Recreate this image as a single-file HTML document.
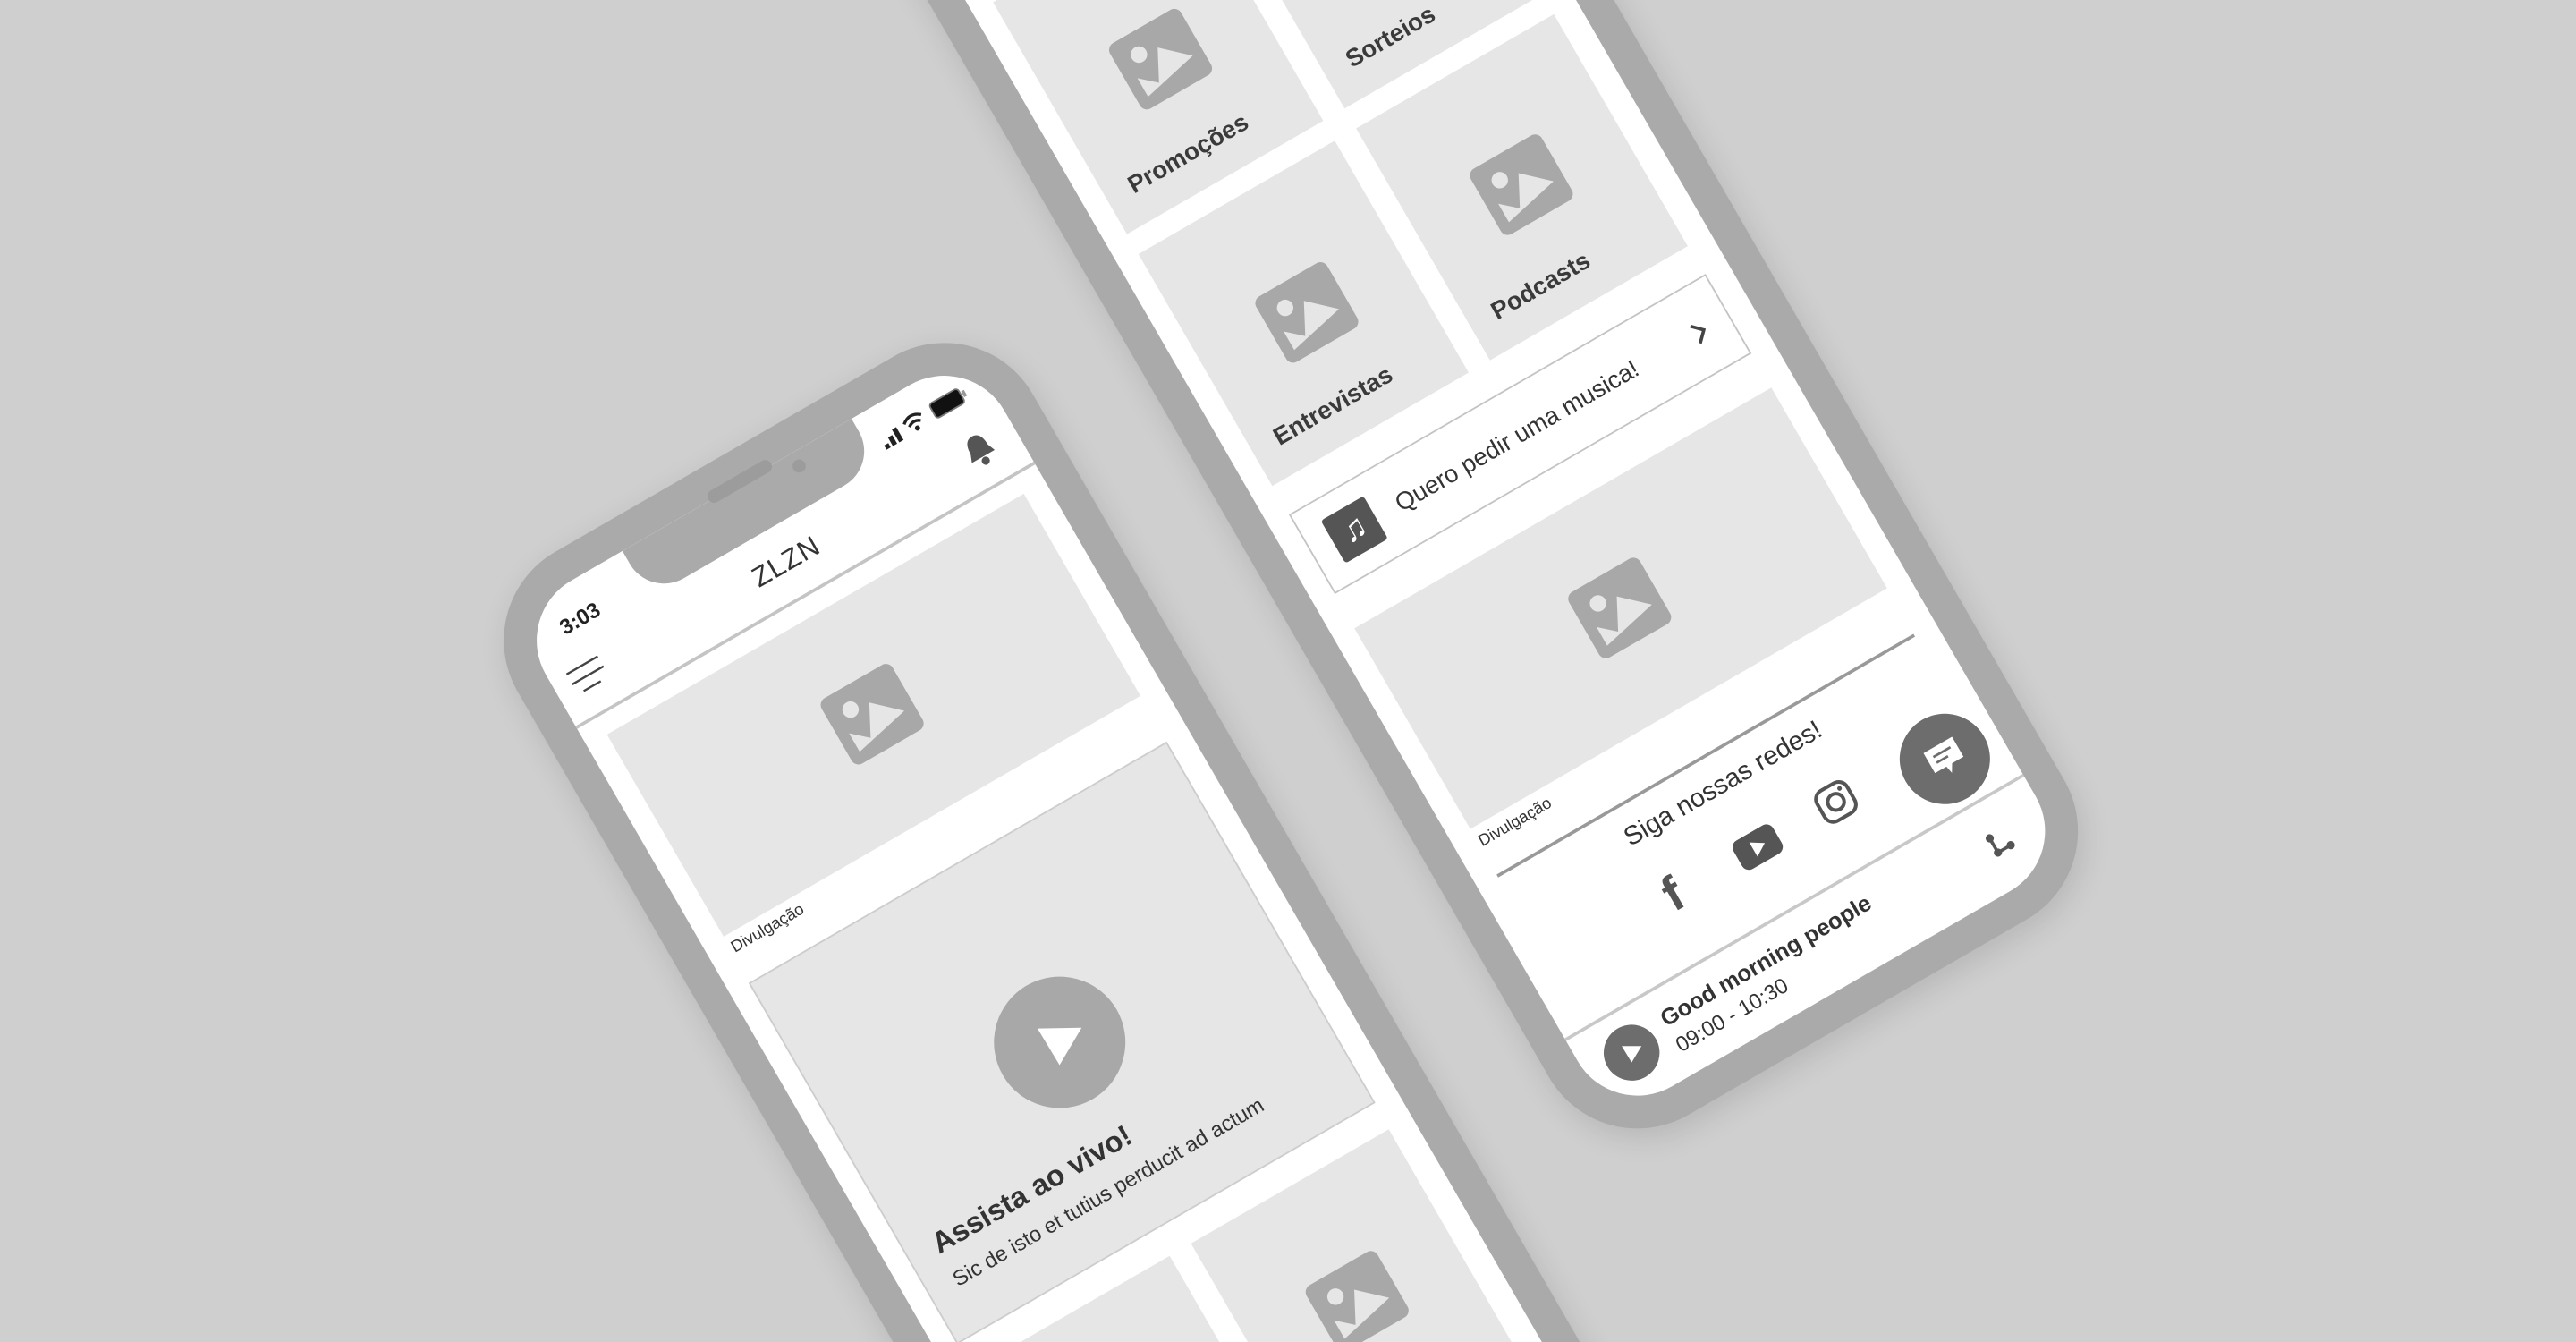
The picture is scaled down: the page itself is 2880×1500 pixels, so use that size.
<!DOCTYPE html>
<html><head><meta charset="utf-8"><style>
*{margin:0;padding:0;box-sizing:border-box}
html,body{width:2880px;height:1500px;overflow:hidden;background:#cfcfcf}
#clip{position:relative;width:2880px;height:1500px;overflow:hidden;background:#cfcfcf}
#wrap{position:absolute;left:0;top:0;width:1568px;height:817px;transform:scale(1.83673);transform-origin:0 0}
.phone{position:absolute;width:362px;height:900px;background:#aaaaaa;border-radius:62px;transform:rotate(-30deg);transform-origin:0 0;box-shadow:0 6px 18px rgba(0,0,0,.12)}
.screen{position:absolute;left:20px;top:20px;width:322px;height:860px;background:#fff;border-radius:42px;overflow:hidden;font-family:"Liberation Sans",sans-serif;color:#333}
.a{position:absolute}
.card{position:absolute;background:#e6e6e6}
.ic{position:absolute;width:50px;height:46px}
.lbl{position:absolute;font-weight:bold;font-size:15px;color:#3a3a3a;white-space:nowrap}
</style></head><body><div id="clip"><div id="wrap">

<svg width="0" height="0" style="position:absolute"><defs>
<symbol id="img" viewBox="0 0 50 46"><rect width="50" height="46" rx="5" fill="#a8a8a8"/><circle cx="15" cy="14" r="5" fill="#e6e6e6"/><path d="M7 39 L7 26 L17 35 L27 16 L43 31 Z" fill="#e6e6e6"/></symbol>
</defs></svg>

<!-- LEFT PHONE -->
<div class="phone" style="left:284px;top:367px">
  <div class="screen">
    <div class="a" style="left:78px;top:0;width:161px;height:33px;background:#aaa;border-radius:0 0 24px 24px"></div>
    <div class="a" style="left:22px;top:15px;font-size:13px;font-weight:bold;color:#222">3:03</div>
    <svg class="a" style="left:248px;top:14px" width="64" height="14" viewBox="0 0 64 14">
      <rect x="0" y="10" width="3" height="3" fill="#222"/><rect x="4.5" y="7" width="3" height="6" fill="#222"/><rect x="9" y="4" width="3" height="9" fill="#222"/>
      <path d="M17 5 Q23 0 29 5 M19 8 Q23 5 27 8" stroke="#222" stroke-width="1.8" fill="none"/><circle cx="23" cy="11" r="1.6" fill="#222"/>
      <rect x="36" y="2" width="20" height="10" rx="2" fill="#111" stroke="#777" stroke-width="1"/><rect x="57" y="5" width="2" height="4" fill="#999"/>
    </svg>
    <div class="a" style="left:0;width:322px;top:46px;text-align:center;font-size:17px;color:#333;letter-spacing:.5px">ZLZN</div>
    <svg class="a" style="left:10px;top:46px" width="24" height="18"><path d="M1 2H23M1 9H23M5 16H17" stroke="#444" stroke-width="1.3"/></svg>
    <svg class="a" style="left:287px;top:45px" width="20" height="22" viewBox="0 0 20 22"><path d="M10 1 C5 1 4 6 4 10 L2 15 H18 L16 10 C16 6 15 1 10 1Z" fill="#555"/><circle cx="10" cy="18" r="2.5" fill="#555"/></svg>
    <div class="a" style="left:0;top:78px;width:322px;height:1.5px;background:#c4c4c4"></div>
    <div class="card" style="left:14px;top:92px;width:293px;height:142px"></div>
    <svg class="ic" style="left:135px;top:139px"><use href="#img"/></svg>
    <div class="a" style="left:15px;top:238px;font-size:10px;color:#333">Divulgação</div>
    <div class="card" style="left:13px;top:266px;width:294px;height:254px;border:1px solid #cdcdcd"></div>
    <div class="a" style="left:119px;top:352px;width:80px;height:80px;border-radius:50%;background:#a8a8a8"></div>
    <svg class="a" style="left:139px;top:372px" width="40" height="40" viewBox="-20 -20 40 40"><path d="M-7.5 -14 L16 -1 L-7 12 Z" fill="#fff"/></svg>
    <div class="a" style="left:31px;top:451px;font-size:18px;font-weight:bold;color:#333">Assista ao vivo!</div>
    <div class="a" style="left:31px;top:478px;font-size:13px;color:#333">Sic de isto et tutius perducit ad actum</div>
    <div class="card" style="left:14px;top:538px;width:138px;height:163px"></div>
    <div class="card" style="left:167px;top:538px;width:139px;height:163px"></div>
    <svg class="ic" style="left:58px;top:596px"><use href="#img"/></svg>
    <svg class="ic" style="left:212px;top:596px"><use href="#img"/></svg>
  </div>
  <div class="a" style="left:159px;top:15px;width:44px;height:8px;border-radius:4px;background:#9c9c9c"></div>
  <div class="a" style="left:213px;top:25px;width:8px;height:8px;border-radius:50%;background:#9c9c9c"></div>
</div>

<!-- RIGHT PHONE -->
<div class="phone" style="left:524px;top:-70px">
  <div class="screen">
    <div class="card" style="left:14px;top:-95px;width:138px;height:163px"></div>
    <div class="card" style="left:167px;top:-95px;width:139px;height:163px"></div>
    <div class="card" style="left:14px;top:82px;width:138px;height:163px"></div>
    <div class="card" style="left:167px;top:82px;width:139px;height:163px"></div>
    <svg class="ic" style="left:60px;top:140px"><use href="#img"/></svg>
    <svg class="ic" style="left:212px;top:140px"><use href="#img"/></svg>
    <div class="lbl" style="left:30px;top:213px">Promoções</div>
    <div class="lbl" style="left:183px;top:213px">Sorteios</div>
    <div class="card" style="left:14px;top:259px;width:138px;height:163px"></div>
    <div class="card" style="left:167px;top:259px;width:139px;height:163px"></div>
    <svg class="ic" style="left:60px;top:318px"><use href="#img"/></svg>
    <svg class="ic" style="left:212px;top:316px"><use href="#img"/></svg>
    <div class="lbl" style="left:30px;top:390px">Entrevistas</div>
    <div class="lbl" style="left:183px;top:390px">Podcasts</div>
    <div class="a" style="left:14px;top:442px;width:293px;height:56px;border:1.5px solid #c4c4c4"></div>
    <div class="a" style="left:29px;top:455px;width:30px;height:30px;background:#555;border-radius:2px;color:#fff;font-size:20px;line-height:30px;text-align:center">♫</div>
    <div class="a" style="left:74px;top:462px;font-size:15px;color:#333">Quero pedir uma musica!</div>
    <svg class="a" style="left:280px;top:463px" width="12" height="16"><path d="M3 2 L9 8 L3 14" stroke="#444" stroke-width="2" fill="none"/></svg>
    <div class="card" style="left:14px;top:522px;width:293px;height:141px"></div>
    <svg class="ic" style="left:135px;top:569px"><use href="#img"/></svg>
    <div class="a" style="left:15px;top:668px;font-size:10px;color:#333">Divulgação</div>
    <div class="a" style="left:14px;top:695px;width:293px;height:1.5px;background:#999"></div>
    <div class="a" style="left:0;width:322px;top:708px;text-align:center;font-size:16px;color:#333">Siga nossas redes!</div>
    <div class="a" style="left:96px;top:745px;font-size:30px;font-weight:bold;color:#555;line-height:30px">f</div>
    <svg class="a" style="left:146px;top:750px" width="28" height="20"><rect width="28" height="20" rx="5" fill="#555"/><path d="M11 5 L19 10 L11 15Z" fill="#fff"/></svg>
    <svg class="a" style="left:203px;top:748px" width="24" height="24"><rect x="1.5" y="1.5" width="21" height="21" rx="6" fill="none" stroke="#555" stroke-width="2.2"/><circle cx="12" cy="12" r="5" fill="none" stroke="#555" stroke-width="2.2"/><circle cx="18" cy="6" r="1.4" fill="#555"/></svg>
    <div class="a" style="left:258px;top:743px;width:55px;height:55px;border-radius:50%;background:#6d6d6d"></div>
    <svg class="a" style="left:274px;top:759px" width="24" height="24"><path d="M2 2 H22 V16 H14 L11 21 L10 16 H2Z" fill="#fff"/><path d="M6 7H18M6 11H14" stroke="#6d6d6d" stroke-width="1.5"/></svg>
    <div class="a" style="left:0;top:802px;width:322px;height:1.5px;background:#c8c8c8"></div>
    <div class="a" style="left:14px;top:813px;width:34px;height:34px;border-radius:50%;background:#6d6d6d"></div>
    <svg class="a" style="left:21px;top:820px" width="20" height="20" viewBox="-10 -10 20 20"><path d="M-3.2 -6.5 L7.2 -0.5 L-3 5.2 Z" fill="#fff"/></svg>
    <div class="a" style="left:57px;top:814px;font-size:14px;font-weight:bold;color:#333">Good morning people</div>
    <div class="a" style="left:57px;top:833px;font-size:13px;color:#333">09:00 - 10:30</div>
    <svg class="a" style="left:280px;top:823px" width="18" height="18"><path d="M5 3 L5 13 L14 13" stroke="#555" stroke-width="2" fill="none"/><circle cx="5" cy="3" r="2.5" fill="#555"/><circle cx="5" cy="13" r="2.5" fill="#555"/><circle cx="14" cy="13" r="2.5" fill="#555"/></svg>
  </div>
</div>

</div></div></body></html>
